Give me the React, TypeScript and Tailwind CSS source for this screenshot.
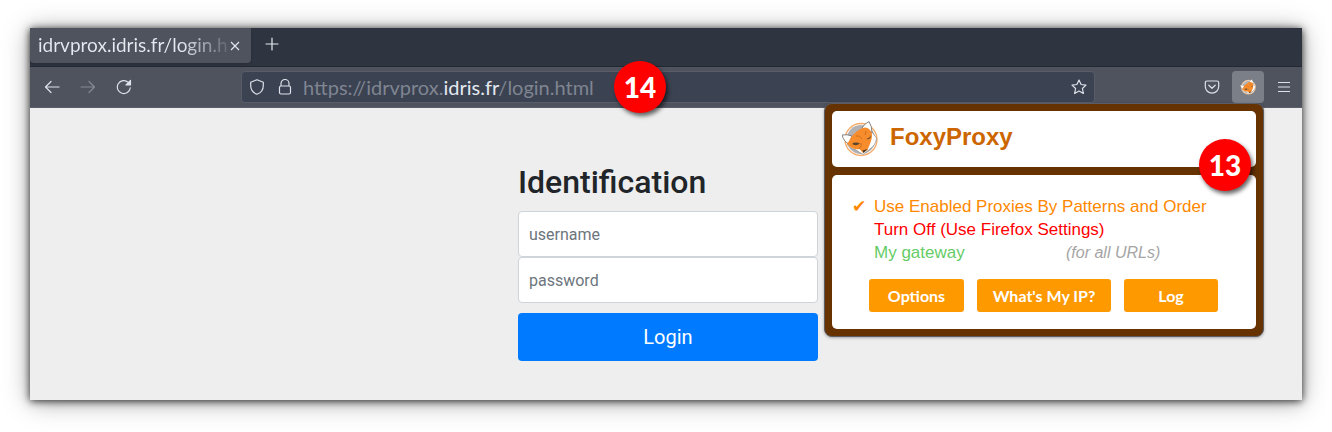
import type { ReactNode } from "react";

function Icon({ children, className = "" }: { children: ReactNode; className?: string }) {
  return (
    <svg
      viewBox="0 0 16 16"
      className={`size-4 shrink-0 ${className}`}
      fill="none"
      stroke="currentColor"
      strokeWidth="1.2"
      strokeLinecap="round"
      strokeLinejoin="round"
      aria-hidden="true"
    >
      {children}
    </svg>
  );
}

function Fox({ className }: { className: string }) {
  return (
    <svg viewBox="0 -1 36 36" className={className} aria-hidden="true">
      <circle cx="19" cy="17.5" r="16" fill="#fff" stroke="#f7ab67" strokeWidth="1.3" />
      <circle cx="19" cy="17.5" r="14.4" fill="#b2b2b4" />
      <path d="M5 22C7 25 10 27 13 27.5L21 32.5L28 27Q34 23 34.5 16L30 10L8 18Z" fill="#fff" stroke="#77777a" strokeWidth=".6" />
      <path d="M0 13Q5 12 10 14L7 22Q2 20 0 13Z" fill="#fff" stroke="#666" strokeWidth=".8" />
      <path d="M20 6Q22 2 27 -.5Q30 4 30 11L25 8Z" fill="#fff" stroke="#666" strokeWidth=".8" />
      <path d="M5 21.5C8 19 8 15 12 12C15 9 19 6 23 5.5C27 6 30 9 30 13C30 19 27 24 25.5 28L21 31L17.5 27C13 28 8 26 5 21.5Z" fill="#f68c2c" />
      <path d="M10 22Q13 19.5 18 21.5Q14 24.5 10 22Z" fill="#59452f" />
      <path d="M24 17Q28 16 29 13Q29 18 24 17Z" fill="#59452f" />
      <path d="M20.5 28.5L25.5 27L21.5 31Z" fill="#41352c" />
      <path d="M14 14Q18 13 20 17M24 9L23 13M17 27Q20 24 19 21" fill="none" stroke="#c66818" strokeWidth=".8" />
    </svg>
  );
}

function Step({ children, className }: { children: ReactNode; className: string }) {
  return (
    <span
      className={`absolute z-20 flex size-13 items-center justify-center rounded-full bg-[#ff0000] pb-px font-['Lato',sans-serif] text-[28px] leading-none font-black text-white shadow-[2px_3px_4px_rgba(0,0,0,0.6)] ${className}`}
    >
      {children}
    </span>
  );
}

const navButton = "flex size-9 items-center justify-center";
const popupButton =
  "h-[33px] rounded-[3px] bg-[#ff9900] text-center font-['Lato',sans-serif] text-base font-bold text-white";

function Popup() {
  return (
    <section
      aria-label="FoxyProxy"
      className="absolute top-9 right-0 z-10 flex w-110 flex-col gap-2 rounded-lg border border-[#5b5c66] bg-[#663300] p-[7px] shadow-[0_1px_3px_rgba(0,0,0,0.3)]"
    >
      <header className="flex h-14 items-center gap-3 rounded-[5px] bg-white px-[10px]">
        <Fox className="size-9" />
        <h2 className="pb-1 font-['Liberation_Sans',sans-serif] text-2xl font-bold text-[#cc6600]">FoxyProxy</h2>
      </header>
      <div className="rounded-[5px] bg-white px-5 pt-5 pb-[17px] font-['Liberation_Sans',sans-serif] text-[17px] leading-[23px]">
        <ul>
          <li className="flex text-[#ff8800]">
            <span className="w-[22px] font-['DejaVu_Sans',sans-serif]">✔</span>
            Use Enabled Proxies By Patterns and Order
          </li>
          <li className="pl-[22px] text-[#ff0000]">Turn Off (Use Firefox Settings)</li>
          <li className="flex pl-[22px] text-[#66cc66]">
            <span className="w-48">My gateway</span>
            <span className="text-base leading-[23px] text-[#a5a5a5] italic">(for all URLs)</span>
          </li>
        </ul>
        <div className="mt-[15px] flex gap-[13px] pl-[17px]">
          <button type="button" className={`${popupButton} w-[95px]`}>Options</button>
          <button type="button" className={`${popupButton} w-[134px]`}>What's My IP?</button>
          <button type="button" className={`${popupButton} w-[94px]`}>Log</button>
        </div>
      </div>
    </section>
  );
}

function Toolbar() {
  return (
    <div className="flex h-[41px] items-center border-b border-[#5b5e69] bg-[#4f535e] pl-1 text-[#dde1e9]">
      <button type="button" aria-label="Back" className={navButton}>
        <Icon><path d="M15 8H1.5M7 2.5L1.5 8L7 13.5" /></Icon>
      </button>
      <button type="button" aria-label="Forward" disabled className={`${navButton} text-[#868a94]`}>
        <Icon><path d="M1 8H14.5M9 2.5L14.5 8L9 13.5" /></Icon>
      </button>
      <button type="button" aria-label="Reload" className={navButton}>
        <Icon>
          <path d="M14.3 8.8A6.5 6.5 0 1 1 12.3 3.4L13.5 4.5" />
          <path fill="currentColor" d="M14.5 1.5V6H10Z" />
        </Icon>
      </button>
      <div className="relative mr-[99px] ml-[99px] flex h-8 flex-1 items-center rounded border border-[#585d69] bg-[#3b4252] px-[7px] whitespace-nowrap">
        <Icon><path d="M8 .8L14.3 3.2V6.5C14.3 10.5 12 13.8 8 15.3C4 13.8 1.7 10.5 1.7 6.5V3.2Z" /></Icon>
        <Icon className="ml-3"><path d="M4 7V4.5A4 4 0 0 1 12 4.5V7M2.5 8.5Q2.5 7 4 7H12Q13.5 7 13.5 8.5V13.5Q13.5 15 12 15H4Q2.5 15 2.5 13.5Z" /></Icon>
        <span className="ml-[10px] font-['Lato',sans-serif] text-xl leading-6 text-[#7f8591]">
          https://idrvprox.<span className="text-[#e5e9f0]">idris.fr</span>/login.html
        </span>
        <Step className="-top-[11px] left-[372px]">14</Step>
        <button type="button" aria-label="Bookmark this page" className="ml-auto">
          <Icon><path d="M8 1L10.1 5.5L15 6.1L11.4 9.5L12.4 14.5L8 12L3.6 14.5L4.6 9.5L1 6.1L5.9 5.5Z" /></Icon>
        </button>
      </div>
      <button type="button" aria-label="Save to Pocket" className={navButton}>
        <Icon><path d="M3 2H13Q14.7 2 14.7 3.7V7.5A6.7 6.7 0 0 1 1.3 7.5V3.7Q1.3 2 3 2ZM4.8 6.2L8 9.3L11.2 6.2" /></Icon>
      </button>
      <button type="button" aria-label="FoxyProxy" className="mx-[2px] flex size-8 items-center justify-center rounded bg-[#7b7f88]">
        <Fox className="size-4" />
      </button>
      <button type="button" aria-label="Menu" className={navButton}>
        <Icon><path strokeLinecap="butt" d="M2 3.5H14M2 8H14M2 12.5H14" /></Icon>
      </button>
    </div>
  );
}

export default function App() {
  return (
    <div className="bg-white px-[30px] pt-7 pb-8">
      <div className="relative bg-[#eeeeee] shadow-[0_2px_24px_rgba(0,0,0,0.35),0_1px_8px_rgba(0,0,0,0.8)]">
        <div className="flex h-[39px] items-start border-b border-[#242832] bg-[#2e3440] text-[#e5e9f0]">
          <div className="flex h-[35px] w-[221px] items-center justify-between rounded-b bg-[#4f535e] pr-[10px] pl-2 shadow-sm">
            <span className="flex-1 overflow-hidden bg-linear-to-r from-[#e5e9f0] from-75% to-[#e5e9f0]/10 bg-clip-text pb-[2px] font-['Lato',sans-serif] text-[19px] leading-6 whitespace-nowrap text-transparent">
              idrvprox.idris.fr/login.h
            </span>
            <button type="button" aria-label="Close tab" className="shrink-0">
              <svg viewBox="0 0 12 12" className="size-3" stroke="currentColor" strokeWidth="1.1" aria-hidden="true"><path d="M2 2L10 10M10 2L2 10" /></svg>
            </button>
          </div>
          <button type="button" aria-label="New tab" className="ml-[13px] flex h-8 w-4 items-center">
            <Icon><path d="M8 2V14M2 8H14" /></Icon>
          </button>
        </div>
        <Toolbar />
        <div className="absolute top-[39px] right-[38px]">
          <Popup />
          <Step className="top-[72px] right-[13px]">13</Step>
        </div>
        <main className="flex justify-center pt-[52px] pb-[39px] pl-1 font-['Roboto',sans-serif]">
          <form className="flex w-75 flex-col" onSubmit={(event) => event.preventDefault()}>
            <h1 className="mb-[6px] text-[32px] leading-[45px] font-medium text-[#212529]">Identification</h1>
            <input
              type="text"
              aria-label="username"
              placeholder="username"
              className="h-[46px] rounded border border-[#ced4da] bg-white px-[10px] text-base placeholder:text-[#6c757d]"
            />
            <input
              type="password"
              aria-label="password"
              placeholder="password"
              className="mb-[10px] h-[46px] rounded border border-[#ced4da] bg-white px-[10px] text-base placeholder:text-[#6c757d]"
            />
            <button type="submit" className="h-12 rounded bg-[#007bff] text-xl text-white">Login</button>
          </form>
        </main>
      </div>
    </div>
  );
}
